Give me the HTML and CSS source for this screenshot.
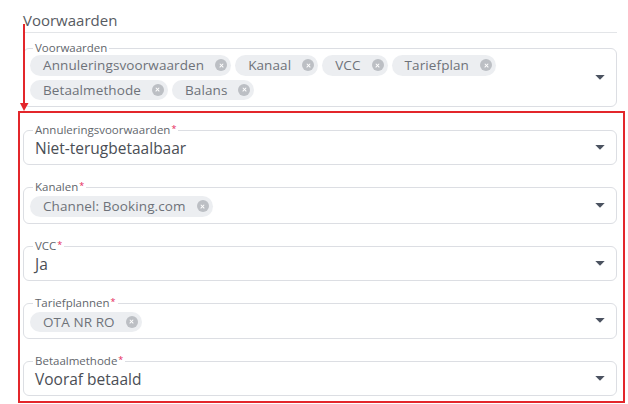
FILE: index.html
```html
<!DOCTYPE html>
<html lang="nl">
<head>
<meta charset="utf-8">
<title>Voorwaarden</title>
<link rel="stylesheet" href="styles.css">
</head>
<body>
<div class="page">
  <h2 class="title">Voorwaarden</h2>

  <fieldset class="field">
    <legend class="label">Voorwaarden</legend>
    <div class="control">
      <div class="chips">
        <span class="chip">Annuleringsvoorwaarden<span class="chip-x"></span></span>
        <span class="chip">Kanaal<span class="chip-x"></span></span>
        <span class="chip">VCC<span class="chip-x"></span></span>
        <span class="chip">Tariefplan<span class="chip-x"></span></span>
        <span class="chip">Betaalmethode<span class="chip-x"></span></span>
        <span class="chip">Balans<span class="chip-x"></span></span>
      </div>
      <svg class="caret" width="10" height="5" viewBox="0 0 10 5"><path d="M0.3 0H9.7L5 4.8Z"/></svg>
    </div>
  </fieldset>

  <div class="highlight">
    <fieldset class="field">
      <legend class="label">Annuleringsvoorwaarden<span class="req">*</span></legend>
      <div class="control">
        <div class="value">Niet-terugbetaalbaar</div>
        <svg class="caret" width="10" height="5" viewBox="0 0 10 5"><path d="M0.3 0H9.7L5 4.8Z"/></svg>
      </div>
    </fieldset>

    <fieldset class="field">
      <legend class="label">Kanalen<span class="req">*</span></legend>
      <div class="control">
        <div class="chips">
          <span class="chip">Channel: Booking.com<span class="chip-x"></span></span>
        </div>
        <svg class="caret" width="10" height="5" viewBox="0 0 10 5"><path d="M0.3 0H9.7L5 4.8Z"/></svg>
      </div>
    </fieldset>

    <fieldset class="field">
      <legend class="label">VCC<span class="req">*</span></legend>
      <div class="control">
        <div class="value">Ja</div>
        <svg class="caret" width="10" height="5" viewBox="0 0 10 5"><path d="M0.3 0H9.7L5 4.8Z"/></svg>
      </div>
    </fieldset>

    <fieldset class="field">
      <legend class="label">Tariefplannen<span class="req">*</span></legend>
      <div class="control">
        <div class="chips">
          <span class="chip">OTA NR RO<span class="chip-x"></span></span>
        </div>
        <svg class="caret" width="10" height="5" viewBox="0 0 10 5"><path d="M0.3 0H9.7L5 4.8Z"/></svg>
      </div>
    </fieldset>

    <fieldset class="field">
      <legend class="label">Betaalmethode<span class="req">*</span></legend>
      <div class="control">
        <div class="value">Vooraf betaald</div>
        <svg class="caret" width="10" height="5" viewBox="0 0 10 5"><path d="M0.3 0H9.7L5 4.8Z"/></svg>
      </div>
    </fieldset>
  </div>

  <svg class="arrow" width="12" height="90" viewBox="0 0 12 90">
    <rect x="3" y="0" width="2" height="80"/>
    <path d="M0 79H8.5L4 87Z"/>
  </svg>
</div>
</body>
</html>
```

FILE: styles.css
```css
* { box-sizing: border-box; }

body {
  margin: 0;
  background: #ffffff;
  font-family: "Open Sans", "DejaVu Sans", sans-serif;
}

.page {
  position: relative;
  padding: 10px 11px 0 23px;
}

.title {
  margin: 0;
  font-size: 15px;
  line-height: 20px;
  font-weight: 400;
  color: #575b62;
  padding-bottom: 2px;
  border-bottom: 1px solid #e3e5e8;
  margin-bottom: 9px;
}

.field {
  margin: 0;
  min-width: 0;
  border: 1px solid #dcdee3;
  border-radius: 6px;
  padding: 0 11px 6px 9px;
}

.label {
  padding: 0 2px;
  font-size: 11.5px;
  line-height: 12px;
  color: #62666c;
}

.req {
  color: #e5265a;
  margin-left: 1px;
  position: relative;
  top: -2px;
  font-size: 9px;
}

.control {
  display: flex;
  align-items: center;
  gap: 8px;
}

.value {
  flex: 1;
  padding: 0 2px;
  margin-top: 1px;
  font-size: 15.5px;
  line-height: 20px;
  color: #4a4e55;
}

.chips {
  flex: 1;
  display: flex;
  flex-wrap: wrap;
  gap: 4px;
  margin-left: -3px;
  margin-top: 1px;
}

.highlight .chips {
  margin-top: 2px;
}

.chip {
  display: inline-flex;
  align-items: center;
  height: 20.5px;
  padding: 0 4px 0 13px;
  border-radius: 11px;
  background: #eceef1;
  color: #6e7279;
  font-size: 13.5px;
  letter-spacing: 0.1px;
  gap: 11px;
  white-space: nowrap;
}

.chip-x {
  position: relative;
  width: 12px;
  height: 12px;
  border-radius: 50%;
  background: #bcbfc4;
  flex: none;
}

.chip-x::before,
.chip-x::after {
  content: "";
  position: absolute;
  left: 3.5px;
  top: 5.5px;
  width: 5px;
  height: 1.2px;
  background: #ffffff;
  transform: rotate(45deg);
}

.chip-x::after {
  transform: rotate(-45deg);
}

.caret {
  flex: none;
  fill: #4b5260;
}

.highlight {
  margin: 4px -8px 0 -5px;
  border: 2px solid #e3262b;
  padding: 11px 6px 5px 3px;
  display: flex;
  flex-direction: column;
  gap: 16px;
}

.arrow {
  position: absolute;
  left: 20px;
  top: 24px;
  fill: #e3262b;
}
```
